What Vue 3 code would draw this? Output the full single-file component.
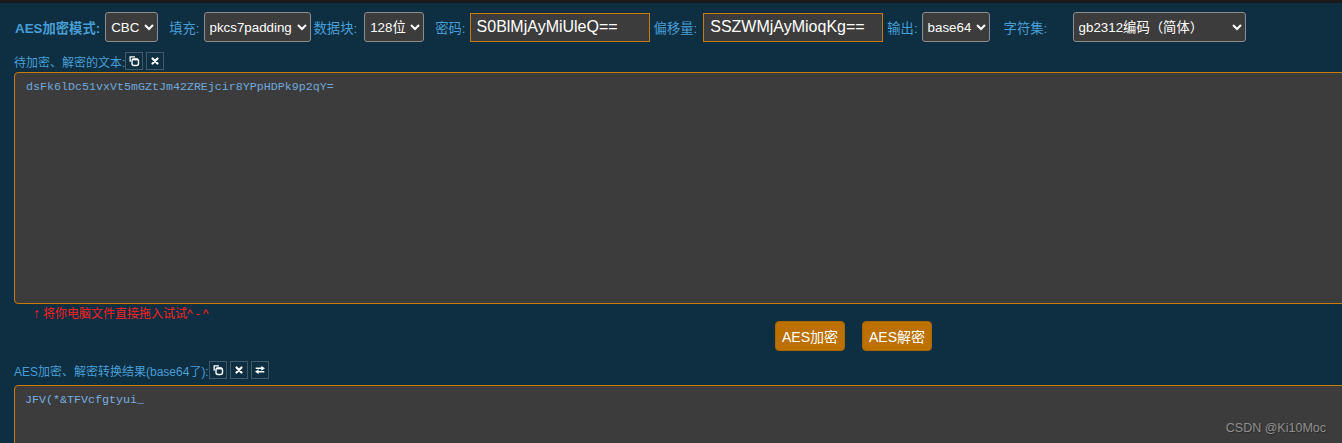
<script setup>
const selects = {
  mode: ['CBC'],
  pad: ['pkcs7padding'],
  block: ['128位'],
  out: ['base64'],
  charset: ['gb2312编码（简体）']
}
</script>

<template>
  <div class="page">
    <div class="toolbar">
      <label class="lbl strong">AES加密模式:</label>
      <select class="sel w-mode"><option v-for="o in selects.mode" :key="o">{{ o }}</option></select>
      <label class="lbl ml-11">填充:</label>
      <select class="sel w-pad"><option v-for="o in selects.pad" :key="o">{{ o }}</option></select>
      <label class="lbl ml-3 mr-7">数据块:</label>
      <select class="sel w-block"><option v-for="o in selects.block" :key="o">{{ o }}</option></select>
      <label class="lbl ml-11">密码:</label>
      <input class="txt" value="S0BlMjAyMiUleQ==" />
      <label class="lbl ml-4 mr-6">偏移量:</label>
      <input class="txt" value="SSZWMjAyMioqKg==" />
      <label class="lbl ml-4">输出:</label>
      <select class="sel w-out"><option v-for="o in selects.out" :key="o">{{ o }}</option></select>
      <label class="lbl ml-14 w-charset-lbl">字符集:</label>
      <select class="sel w-charset"><option v-for="o in selects.charset" :key="o">{{ o }}</option></select>
    </div>

    <div class="caption first">
      <span>待加密、解密的文本:</span>
      <button class="ico">
        <svg viewBox="0 0 12 12"><path d="M1.5 1.2h5.5v1.3H2.8v4.3H1.5z" fill="#fff"/><rect x="4" y="4" width="6.5" height="6.5" rx="2" fill="none" stroke="#fff" stroke-width="1.4"/><rect x="4.5" y="3.6" width="5.5" height="1.8" fill="#fff"/></svg>
      </button>
      <button class="ico">
        <svg viewBox="0 0 12 12"><path d="M3.5 3.5l5 5M8.5 3.5l-5 5" stroke="#fff" stroke-width="2.2" stroke-linecap="round" fill="none"/></svg>
      </button>
    </div>
    <textarea class="area tall" spellcheck="false">dsFk6lDc51vxVt5mGZtJm42ZREjcir8YPpHDPk9p2qY=</textarea>
    <div class="tip"><span class="arrow">↑</span>将你电脑文件直接拖入试试<span class="smile">^-^</span></div>

    <div class="actions">
      <button class="go">AES加密</button>
      <button class="go">AES解密</button>
    </div>

    <div class="caption second">
      <span>AES加密、解密转换结果(base64了):</span>
      <button class="ico">
        <svg viewBox="0 0 12 12"><path d="M1.5 1.2h5.5v1.3H2.8v4.3H1.5z" fill="#fff"/><rect x="4" y="4" width="6.5" height="6.5" rx="2" fill="none" stroke="#fff" stroke-width="1.4"/><rect x="4.5" y="3.6" width="5.5" height="1.8" fill="#fff"/></svg>
      </button>
      <button class="ico">
        <svg viewBox="0 0 12 12"><path d="M3.5 3.5l5 5M8.5 3.5l-5 5" stroke="#fff" stroke-width="2.2" stroke-linecap="round" fill="none"/></svg>
      </button>
      <button class="ico">
        <svg viewBox="0 0 14 12"><path d="M2 3.2h6.5V1.2L12.8 4 8.5 6.8V4.9H2zM12 7.2v1.7H5.5v1.9L1.2 8l4.3-2.8v2z" fill="#fff"/></svg>
      </button>
    </div>
    <textarea class="area result" spellcheck="false">JFV(*&amp;TFVcfgtyui_</textarea>

    <div class="mark">CSDN @Ki10Moc</div>
  </div>
</template>

<style scoped>
.page {
  position: relative;
  box-sizing: border-box;
  width: 1342px;
  height: 443px;
  overflow: hidden;
  background: #0e2e41;
  border-top: 3px solid #1a1a1a;
  padding: 9px 0 0 14px;
  font-family: "Liberation Sans", "Noto Sans CJK SC", sans-serif;
  color: #479fd6;
}
.toolbar {
  display: flex;
  align-items: center;
  height: 30px;
  white-space: nowrap;
}
.lbl { flex: none; margin-right: 4px; font-size: 13.33px; }
.strong { font-weight: 700; margin-left: 1px; margin-right: 5px; }
.ml-3 { margin-left: 3px; }
.ml-4 { margin-left: 4px; }
.ml-11 { margin-left: 11px; }
.ml-14 { margin-left: 14px; }
.mr-6 { margin-right: 6px; }
.mr-7 { margin-right: 7px; }
.w-charset-lbl { width: 69px; margin-right: 0; }
.sel {
  box-sizing: border-box;
  height: 30px;
  color-scheme: dark;
  background: #3c3c3c;
  color: #fff;
  border: 1px solid #8d8d8d;
  border-radius: 3px;
  font-family: inherit;
  font-size: 13.33px;
  padding: 0 0 0 1px;
  flex: none;
}
.w-mode { width: 53px; }
.w-pad { width: 107px; }
.w-block { width: 60px; }
.w-out { width: 68px; }
.w-charset { width: 173px; }
.txt {
  box-sizing: border-box;
  flex: none;
  width: 180px;
  height: 29px;
  background: #3c3c3c;
  color: #fff;
  border: 1px solid #c87a0b;
  border-radius: 0;
  padding: 0 6px;
  font-family: inherit;
  font-size: 16px;
  outline: none;
}
.caption {
  display: flex;
  align-items: center;
  gap: 3px;
  height: 18px;
  font-size: 12px;
  white-space: nowrap;
}
.caption.first { margin-top: 10px; }
.caption.second { margin-top: 10px; }
.caption span { margin-right: -3px; }
.ico {
  box-sizing: border-box;
  flex: none;
  width: 18px;
  height: 18px;
  padding: 2px;
  background: #0e2e41;
  border: 1px solid #43596a;
  display: flex;
  align-items: center;
  justify-content: center;
}
.ico svg { display: block; width: 12px; height: 12px; }
.area {
  display: block;
  box-sizing: border-box;
  width: 1400px;
  height: 120px;
  margin: 6px 0 0;
  padding: 7px 11px;
  background: #3c3c3c;
  color: #6ea8dc;
  border: 1px solid #c87a0b;
  border-radius: 4px;
  font-family: "Liberation Mono", monospace;
  font-size: 11.67px;
  line-height: 14px;
  resize: none;
  outline: none;
  overflow: hidden;
}
.tall { height: 232px; margin-top: 2px; }
.result { padding-left: 10px; color: #7aaee0; }
.tip {
  height: 17px;
  margin-left: 19px;
  font-size: 12px;
  line-height: 18px;
  color: #ff2020;
  white-space: nowrap;
}
.arrow { display: inline-block; width: 10px; font-size: 14px; font-weight: 700; }
.smile { letter-spacing: 3px; }
.actions {
  display: flex;
  justify-content: center;
  gap: 17px;
  width: 1679px;
  height: 30px;
}
.go {
  box-sizing: border-box;
  flex: none;
  width: 70px;
  height: 30px;
  background: #bb7000;
  color: #fff;
  border: 1px solid #a86500;
  border-radius: 4px;
  font-family: inherit;
  font-size: 14px;
  padding: 0;
}
.mark {
  position: absolute;
  right: 16px;
  top: 416px;
  font-size: 12.5px;
  line-height: 18px;
  color: #8f8f8f;
  text-shadow: 1px 1px 1px rgba(0, 0, 0, 0.3);
}
</style>
